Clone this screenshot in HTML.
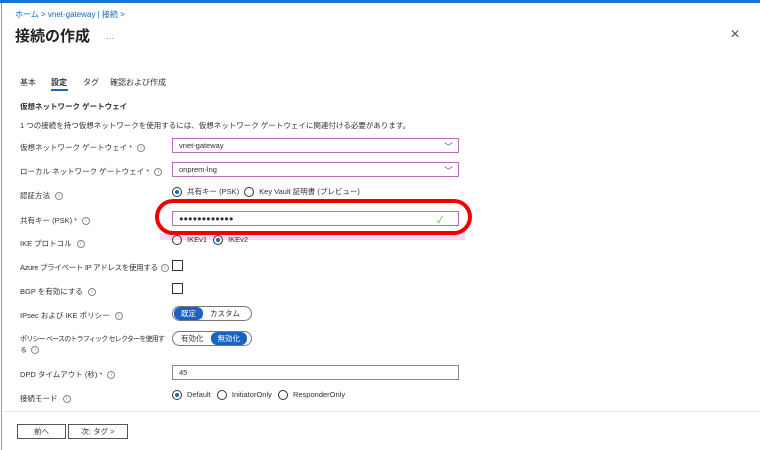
<!DOCTYPE html><html><head><meta charset="utf-8"><style>
*{box-sizing:border-box;margin:0;padding:0}
body{width:760px;height:450px;overflow:hidden;background:#fff;font-family:"Liberation Sans","Noto Sans CJK JP",sans-serif;color:#323130;position:relative;font-size:7.5px}
.a{position:absolute;white-space:nowrap}
.inp{position:absolute;left:172px;width:287px;height:15px;border:1px solid #b36fb8;font-size:7.5px;padding:2px 6px;background:#fff}
.chev{position:absolute;right:5px;top:1px;font-size:9px;color:#555}
.i{display:inline-block;width:8px;height:8px;border:1px solid #888;border-radius:50%;font-size:5px;text-align:center;line-height:6px;color:#888;margin-left:5px;vertical-align:middle}
.st{color:#c00}
.r{display:inline-block;width:10px;height:10px;border:1px solid #333;border-radius:50%;vertical-align:middle;margin-right:5px;position:relative}
.r.on::after{content:"";position:absolute;left:2px;top:2px;width:4px;height:4px;border-radius:50%;background:#0f6cbd}
.cb{position:absolute;left:172px;width:11px;height:11px;border:1px solid #333}
.tg{position:absolute;left:172px;height:15px;border:1px solid #777;border-radius:8px;font-size:7.5px;display:flex;align-items:center;padding:1px}
.tg span{padding:1px 7px;border-radius:6px}
.tg .on{background:#1a63c4;color:#fff}
.btn{position:absolute;top:424px;height:15px;border:1px solid #555;font-size:7.5px;text-align:center;line-height:13px}
</style></head><body>
<div class="a" style="left:0;top:0;width:760px;height:3px;background:#1d6fd1"></div>
<div class="a" style="left:1px;top:3px;width:1px;height:447px;background:#999"></div>
<div class="a" style="left:15px;top:9px;font-size:8px;color:#0f6cbd">ホーム &gt; vnet-gateway | 接続 &gt;</div>
<div class="a" style="left:15px;top:25px;font-size:15px;font-weight:bold;color:#222">接続の作成 <span style="font-size:8px;font-weight:normal;color:#666;margin-left:12px">···</span></div>
<div class="a" style="left:730px;top:27px;font-size:12px;color:#555">✕</div>
<div class="a" style="left:20px;top:77px;font-size:8px">基本</div>
<div class="a" style="left:51px;top:77px;font-size:8px;font-weight:bold">設定</div>
<div class="a" style="left:51px;top:89px;width:17px;height:2px;background:#0f6cbd"></div>
<div class="a" style="left:83px;top:77px;font-size:8px">タグ</div>
<div class="a" style="left:110px;top:77px;font-size:8px">確認および作成</div>
<div class="a" style="left:20px;top:101px;font-weight:bold">仮想ネットワーク ゲートウェイ</div>
<div class="a" style="left:20px;top:120px">1 つの接続を持つ仮想ネットワークを使用するには、仮想ネットワーク ゲートウェイに関連付ける必要があります。</div>
<div class="a" style="left:20px;top:142px">仮想ネットワーク ゲートウェイ <span class="st">*</span><span class="i">i</span></div>
<div class="inp" style="top:138px">vnet-gateway<span class="chev">﹀</span></div>
<div class="a" style="left:20px;top:166px">ローカル ネットワーク ゲートウェイ <span class="st">*</span><span class="i">i</span></div>
<div class="inp" style="top:162px">onprem-lng<span class="chev">﹀</span></div>
<div class="a" style="left:20px;top:190px">認証方法<span class="i">i</span></div>
<div class="a" style="left:172px;top:186px;font-size:7.5px"><span class="r on"></span>共有キー (PSK) <span class="r" style="margin-left:3px"></span>Key Vault 証明書 (プレビュー)</div>
<div class="a" style="left:160px;top:233px;width:305px;height:7px;background:#fbd8f3"></div>
<div class="a" style="left:20px;top:215px">共有キー (PSK) <span class="st">*</span><span class="i">i</span></div>
<div class="inp" style="top:211px;font-weight:bold;letter-spacing:0">●●●●●●●●●●●●<span class="chev" style="color:#8c8;right:15px">✓</span></div>
<div class="a" style="left:155px;top:199px;width:317px;height:36px;border:4px solid #e00;border-radius:18px"></div>
<div class="a" style="left:20px;top:238px">IKE プロトコル<span class="i">i</span></div>
<div class="a" style="left:172px;top:235px;font-size:7.5px"><span class="r"></span>IKEv1 <span class="r on" style="margin-left:4px"></span>IKEv2</div>
<div class="a" style="left:20px;top:262px;letter-spacing:-0.3px">Azure プライベート IP アドレスを使用する<span class="i" style="margin-left:3px">i</span></div>
<div class="cb" style="top:260px"></div>
<div class="a" style="left:20px;top:286px">BGP を有効にする<span class="i">i</span></div>
<div class="cb" style="top:283px"></div>
<div class="a" style="left:20px;top:310px">IPsec および IKE ポリシー<span class="i">i</span></div>
<div class="tg" style="top:306px;width:80px"><span class="on">既定</span><span>カスタム</span></div>
<div class="a" style="left:20px;top:334px;line-height:11px;font-size:7px;letter-spacing:-0.8px">ポリシー ベースのトラフィック セレクターを使用す<br>る<span class="i">i</span></div>
<div class="tg" style="top:331px;width:80px"><span>有効化</span><span class="on">無効化</span></div>
<div class="a" style="left:20px;top:369px">DPD タイムアウト (秒) <span class="st">*</span><span class="i">i</span></div>
<div class="inp" style="top:365px;width:287px;border-color:#888">45</div>
<div class="a" style="left:20px;top:393px">接続モード<span class="i">i</span></div>
<div class="a" style="left:172px;top:390px;font-size:7.5px"><span class="r on"></span>Default <span class="r" style="margin-left:4px"></span>InitiatorOnly <span class="r" style="margin-left:4px"></span>ResponderOnly</div>
<div class="a" style="left:4px;top:411px;width:756px;height:1px;background:#e6e6e6"></div>
<div class="btn" style="left:17px;width:49px">前へ</div>
<div class="btn" style="left:68px;width:60px">次: タグ &gt;</div>
</body></html>
